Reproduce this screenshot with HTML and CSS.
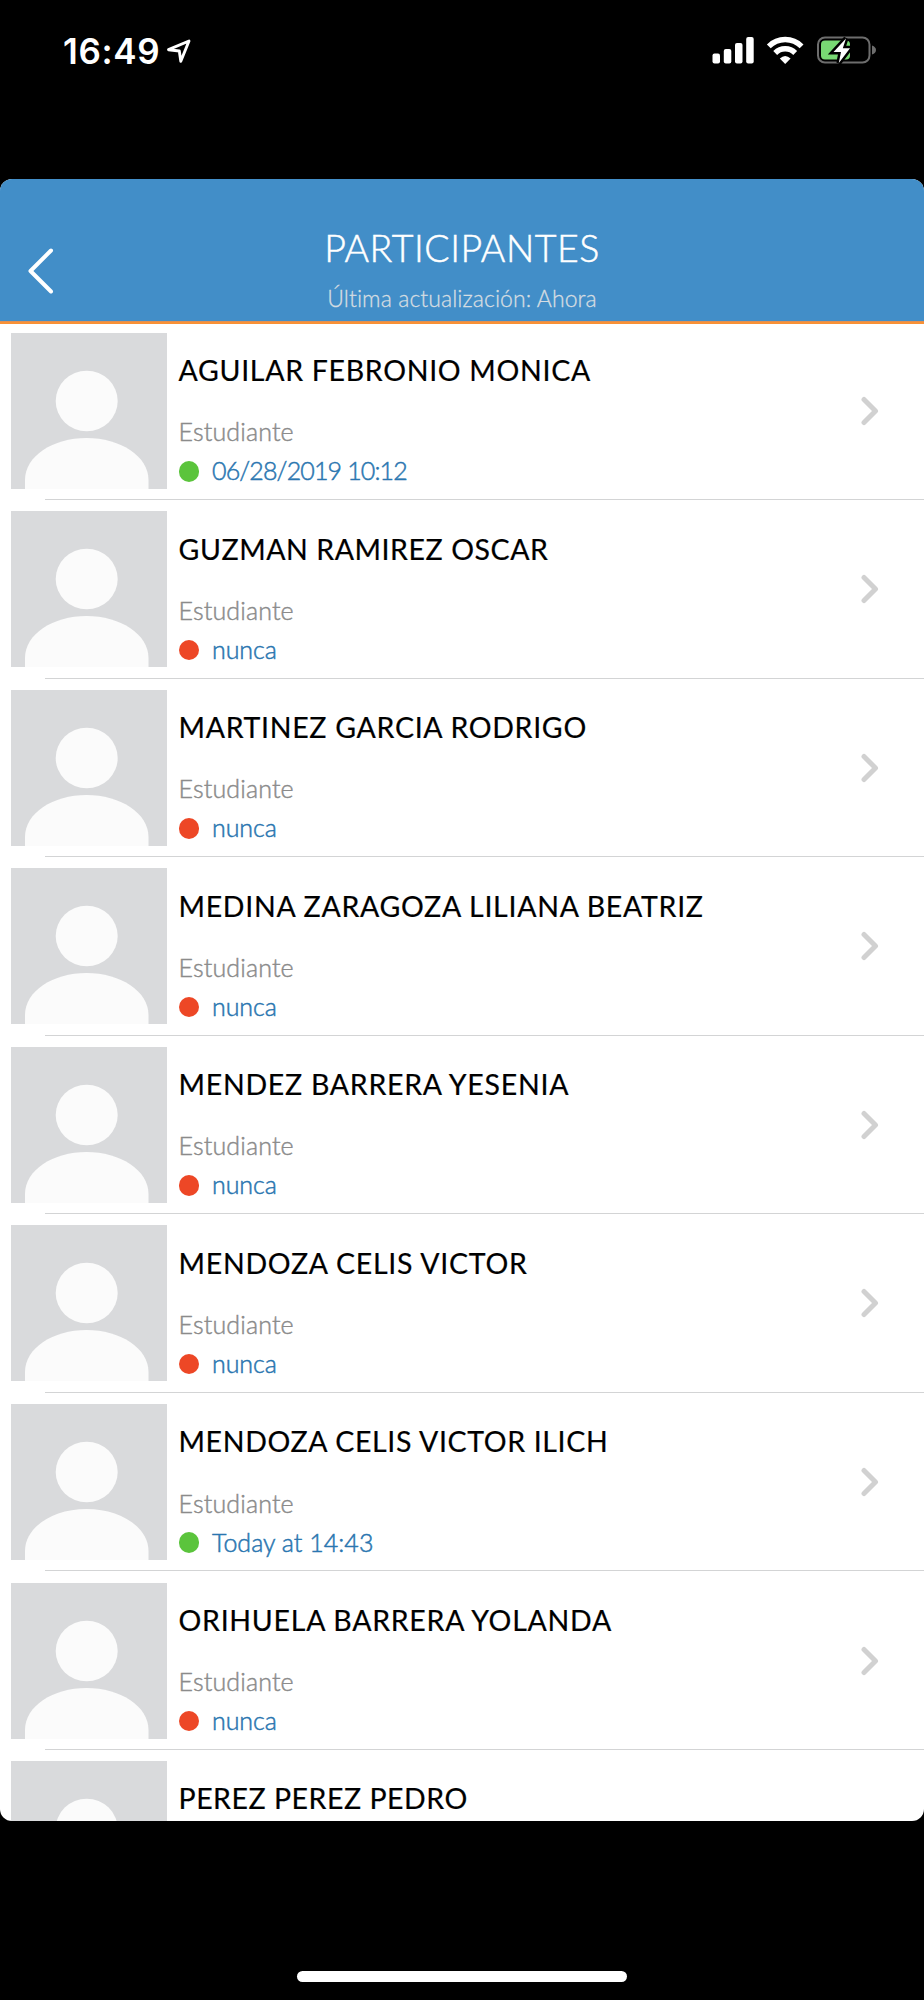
FILE: index.html
```html
<!DOCTYPE html>
<html lang="es">
<head>
<meta charset="utf-8">
<title>Participantes</title>
<link rel="stylesheet" href="styles.css">
</head>
<body>
<div class="status-bar">
  <div class="clock"><span class="time">16:49</span>
    <svg class="location" width="26" height="26" viewBox="0 0 26 26"><path d="M2.500 11.700 23 3 14.800 23.300 13.300 13Z" /></svg>
  </div>
  <svg class="indicators" width="170" height="34" viewBox="0 0 170 34">
    <g fill="#fff"><rect x="2.5" y="20.5" width="7.5" height="10" rx="2"/><rect x="13.8" y="16" width="7.5" height="14.5" rx="2"/><rect x="25" y="10" width="7.5" height="20.5" rx="2"/><rect x="36.2" y="4" width="7.5" height="26.5" rx="2"/></g>
    <g fill="none" stroke="#fff" stroke-width="5.4"><path d="M58.800 13.300A23.200 23.200 0 0 1 91.600 13.300"/><path d="M65.200 20A14 14 0 0 1 85.200 20"/></g>
    <path fill="#fff" d="M75.200 31 69.800 25.600Q75.200 20.200 80.600 25.600Z"/>
    <rect x="108" y="4.5" width="51.5" height="25" rx="7" fill="none" stroke="#6d6d6d" stroke-width="2"/>
    <path fill="#6d6d6d" d="M162 12.500Q166 14 166 17T162 21.500Z"/>
    <rect x="111" y="7.5" width="29" height="19" rx="4" fill="#78d973"/>
    <path d="M136 5.500 123.500 19H131L128.800 30 140 15.200H132.800Z" fill="#fff" stroke="#000" stroke-width="5" paint-order="stroke"/>
  </svg>
</div>
<main class="card">
  <header class="header">
    <svg class="back" width="29" height="48" viewBox="0 0 29 48"><path d="M25 3.500 4.500 24 25 44.500"/></svg>
    <h1 class="title">PARTICIPANTES</h1>
    <p class="updated">Última actualización: Ahora</p>
  </header>
  <ul class="list" id="list"></ul>
</main>
<div class="home"></div>
<script src="participants.js"></script>
</body>
</html>
```

FILE: styles.css
```css
* { box-sizing: border-box; margin: 0; padding: 0; }
body { width: 924px; height: 2000px; background: #000; font-family: Lato, "Open Sans", sans-serif; font-variant-ligatures: none; display: flex; flex-direction: column; align-items: center; overflow: hidden; }
.status-bar { width: 100%; height: 179px; padding: 33px 44px 0 63px; display: flex; justify-content: space-between; align-items: flex-start; flex: none; }
.clock { display: flex; align-items: center; gap: 6px; color: #fff; }
.time { font: 600 35px/36px Inter, sans-serif; letter-spacing: 0.65px; white-space: nowrap; }
.location { fill: none; stroke: #fff; stroke-width: 2.9; stroke-linejoin: round; }
.indicators { flex: none; }
.card { width: 924px; height: 1642px; border-radius: 12px; background: #fff; overflow: hidden; flex: none; }
.header { position: relative; height: 145px; padding-top: 46px; background: linear-gradient(#e28f4f, #e28f4f) 0 100% / 100% 1px no-repeat #428ec8; border-bottom: 2px solid #f89136; background-clip: padding-box; text-align: center; }
.back { position: absolute; left: 26px; top: 68px; fill: none; stroke: #fff; stroke-width: 4; stroke-linecap: round; stroke-linejoin: round; }
.title { font-size: 37.5px; line-height: 45px; font-weight: 300; letter-spacing: 0.52px; color: #fff; -webkit-text-stroke: 0.5px #fff; }
.updated { margin-top: 14px; font-size: 23px; line-height: 28px; font-weight: 300; letter-spacing: 0.07px; color: #d5dde2; -webkit-text-stroke: 0.3px #d5dde2; }
.list { list-style: none; }
.row { height: 178.55px; padding: 11.2px 45px 0 11px; display: flex; align-items: flex-start; background: linear-gradient(#d3d4d5, #d3d4d5) 45px 100% / 100% 1px no-repeat; }
.row:first-child { height: 176.05px; padding-top: 8.7px; }
.avatar { flex: none; background: #d9dadc; }
.info { flex: 1; padding: 20.3px 0 0 11.5px; }
.name { font-size: 28.5px; line-height: 34px; font-weight: 400; letter-spacing: 0.7px; color: #000; white-space: nowrap; -webkit-text-stroke: 0.2px #000; }
.row:nth-child(2) .name { letter-spacing: 0.57px; }
.row:nth-child(4) .name { letter-spacing: 0.72px; }
.row:nth-child(5) .name, .row:nth-child(6) .name { letter-spacing: 0.74px; }
.row:nth-child(7) .name { letter-spacing: 0.65px; }
.row:nth-child(8) .name { letter-spacing: 0.74px; }
.row:nth-child(9) .name { letter-spacing: 0.52px; }
.role { margin-top: 29.3px; font-size: 25px; line-height: 30px; font-weight: 300; color: #8b8b8b; letter-spacing: 0.15px; -webkit-text-stroke: 0.45px #8b8b8b; }
.seen { margin-top: 9px; display: flex; align-items: center; gap: 13px; font-size: 25px; line-height: 30px; color: #2a76b0; font-weight: 300; -webkit-text-stroke: 0.5px #2a76b0; }
.word { letter-spacing: -0.1px; }
.date { letter-spacing: -0.85px; }
.time-ago { letter-spacing: 0.03px; }
.dot { width: 20.5px; height: 20.5px; margin-top: 2px; border-radius: 50%; background: #ed4726; }
.dot.on { background: #5bc43c; }
.chevron { margin-top: 63px; fill: none; stroke: #d1d1d1; stroke-width: 5; stroke-linecap: round; stroke-linejoin: round; }
.home { width: 330px; height: 11px; border-radius: 6px; background: #fff; margin-top: 150px; flex: none; }
```

FILE: participants.js
```js
const people = [
  { name: "AGUILAR FEBRONIO MONICA", seen: "06/28/2019 10:12", on: true, kind: "date" },
  { name: "GUZMAN RAMIREZ OSCAR", seen: "nunca" },
  { name: "MARTINEZ GARCIA RODRIGO", seen: "nunca" },
  { name: "MEDINA ZARAGOZA LILIANA BEATRIZ", seen: "nunca" },
  { name: "MENDEZ BARRERA YESENIA", seen: "nunca" },
  { name: "MENDOZA CELIS VICTOR", seen: "nunca" },
  { name: "MENDOZA CELIS VICTOR ILICH", seen: "Today at 14:43", on: true, kind: "time-ago" },
  { name: "ORIHUELA BARRERA YOLANDA", seen: "nunca" },
  { name: "PEREZ PEREZ PEDRO" },
];
const details = (p) => p.seen ? `
    <p class="role">Estudiante</p>
    <p class="seen"><span class="dot ${p.on ? "on" : ""}"></span><span class="${p.kind || "word"}">${p.seen}</span></p>` : "";
document.getElementById("list").innerHTML = people.map((p) => `
<li class="row">
  <svg class="avatar" width="156" height="156" viewBox="0 0 156 156"><ellipse cx="75.7" cy="68" rx="31" ry="30.3" fill="#fbfbfb"/><path fill="#fbfbfb" d="M14 156V147C14 123 42 105 75.500 105S137.500 123 137.500 147V156Z"/></svg>
  <div class="info"><p class="name">${p.name}</p>${details(p)}</div>
  ${p.seen ? '<svg class="chevron" width="18" height="30" viewBox="0 0 18 30"><path d="M3 3.500 14.500 15 3 26.500"/></svg>' : ""}
</li>`).join("");
```
